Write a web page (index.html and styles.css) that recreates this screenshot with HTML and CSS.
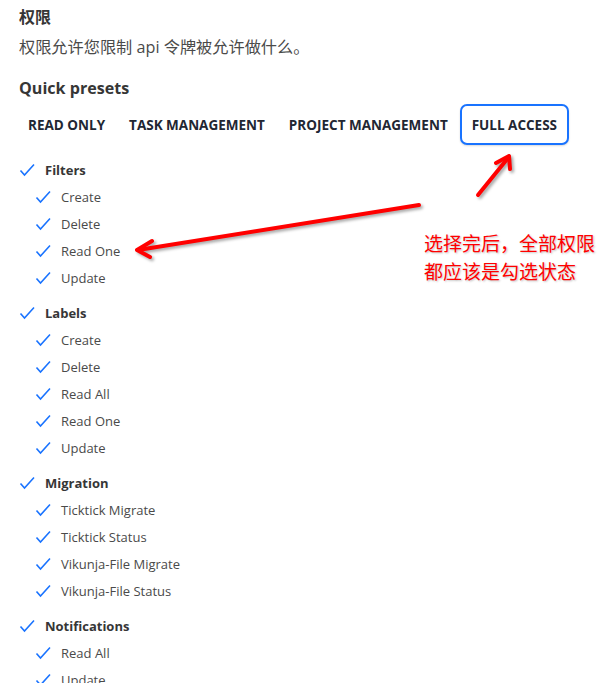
FILE: index.html
```html
<!DOCTYPE html>
<html lang="zh">
<head>
<meta charset="utf-8">
<link rel="stylesheet" href="styles.css">
</head>
<body>
<div class="page">
  <h3 class="title">权限</h3>
  <p class="desc">权限允许您限制 api 令牌被允许做什么。</p>
  <h4 class="presets-title">Quick presets</h4>
  <div class="presets">
    <button class="preset">READ ONLY</button>
    <button class="preset">TASK MANAGEMENT</button>
    <button class="preset">PROJECT MANAGEMENT</button>
    <button class="preset active">FULL ACCESS</button>
  </div>

  <div class="groups">
    <div class="group">
      <div class="row head"><svg class="chk" viewBox="0 0 16 14"><path d="M1.5 7.5 L5.5 12 L15 1.5"/></svg><span>Filters</span></div>
      <div class="row item"><svg class="chk" viewBox="0 0 16 14"><path d="M1.5 7.5 L5.5 12 L15 1.5"/></svg><span>Create</span></div>
      <div class="row item"><svg class="chk" viewBox="0 0 16 14"><path d="M1.5 7.5 L5.5 12 L15 1.5"/></svg><span>Delete</span></div>
      <div class="row item"><svg class="chk" viewBox="0 0 16 14"><path d="M1.5 7.5 L5.5 12 L15 1.5"/></svg><span>Read One</span></div>
      <div class="row item"><svg class="chk" viewBox="0 0 16 14"><path d="M1.5 7.5 L5.5 12 L15 1.5"/></svg><span>Update</span></div>
    </div>
    <div class="group">
      <div class="row head"><svg class="chk" viewBox="0 0 16 14"><path d="M1.5 7.5 L5.5 12 L15 1.5"/></svg><span>Labels</span></div>
      <div class="row item"><svg class="chk" viewBox="0 0 16 14"><path d="M1.5 7.5 L5.5 12 L15 1.5"/></svg><span>Create</span></div>
      <div class="row item"><svg class="chk" viewBox="0 0 16 14"><path d="M1.5 7.5 L5.5 12 L15 1.5"/></svg><span>Delete</span></div>
      <div class="row item"><svg class="chk" viewBox="0 0 16 14"><path d="M1.5 7.5 L5.5 12 L15 1.5"/></svg><span>Read All</span></div>
      <div class="row item"><svg class="chk" viewBox="0 0 16 14"><path d="M1.5 7.5 L5.5 12 L15 1.5"/></svg><span>Read One</span></div>
      <div class="row item"><svg class="chk" viewBox="0 0 16 14"><path d="M1.5 7.5 L5.5 12 L15 1.5"/></svg><span>Update</span></div>
    </div>
    <div class="group">
      <div class="row head"><svg class="chk" viewBox="0 0 16 14"><path d="M1.5 7.5 L5.5 12 L15 1.5"/></svg><span>Migration</span></div>
      <div class="row item"><svg class="chk" viewBox="0 0 16 14"><path d="M1.5 7.5 L5.5 12 L15 1.5"/></svg><span>Ticktick Migrate</span></div>
      <div class="row item"><svg class="chk" viewBox="0 0 16 14"><path d="M1.5 7.5 L5.5 12 L15 1.5"/></svg><span>Ticktick Status</span></div>
      <div class="row item"><svg class="chk" viewBox="0 0 16 14"><path d="M1.5 7.5 L5.5 12 L15 1.5"/></svg><span>Vikunja-File Migrate</span></div>
      <div class="row item"><svg class="chk" viewBox="0 0 16 14"><path d="M1.5 7.5 L5.5 12 L15 1.5"/></svg><span>Vikunja-File Status</span></div>
    </div>
    <div class="group">
      <div class="row head"><svg class="chk" viewBox="0 0 16 14"><path d="M1.5 7.5 L5.5 12 L15 1.5"/></svg><span>Notifications</span></div>
      <div class="row item"><svg class="chk" viewBox="0 0 16 14"><path d="M1.5 7.5 L5.5 12 L15 1.5"/></svg><span>Read All</span></div>
      <div class="row item"><svg class="chk" viewBox="0 0 16 14"><path d="M1.5 7.5 L5.5 12 L15 1.5"/></svg><span>Update</span></div>
    </div>
  </div>
</div>

<svg class="arrows" viewBox="0 0 610 683" width="610" height="683">
  <g fill="none" stroke="#ff0000" stroke-width="4" stroke-linecap="round" stroke-linejoin="round">
    <path d="M419 205 L138 250"/>
    <path d="M152 241 L137 250 L150 257"/>
    <path d="M478 195 L508 158"/>
    <path d="M496 163 L509 156 L510 169"/>
  </g>
</svg>
<div class="note">选择完后，全部权限<br>都应该是勾选状态</div>
</body>
</html>
```
FILE: styles.css
```css
html, body {
  margin: 0;
  padding: 0;
  background: #fff;
}
body {
  font-family: "Open Sans", "Noto Sans CJK SC", sans-serif;
  color: #4a4a4a;
  width: 610px;
  height: 683px;
  overflow: hidden;
  position: relative;
}
.page {
  padding: 6px 0 0 19px;
}
.title {
  margin: 0;
  font-size: 16px;
  font-weight: 700;
  color: #363636;
  line-height: 22px;
}
.desc {
  margin: 8px 0 0;
  font-size: 16.2px;
  line-height: 22px;
  color: #4a4a4a;
}
.presets-title {
  margin: 19px 0 0;
  font-size: 16.1px;
  font-weight: 700;
  color: #363636;
  line-height: 22px;
}
.presets {
  display: flex;
  margin: 5px 0 0 -3px;
}
.preset {
  font-family: "Open Sans", sans-serif;
  font-size: 13.5px;
  font-weight: 700;
  color: #222733;
  background: #fff;
  border: 2px solid transparent;
  border-radius: 7px;
  height: 41px;
  padding: 0 10px;
}
.preset.active {
  border-color: #1973ff;
  box-shadow: 0 1px 2px rgba(0,0,0,0.15);
}
.groups {
  margin-top: 11px;
}
.group {
  margin-bottom: 8px;
}
.row {
  display: flex;
  align-items: center;
  height: 27px;
  font-size: 13px;
}
.row.item {
  padding-left: 16px;
}
.row.head span {
  font-weight: 700;
  color: #363636;
}
.chk {
  width: 16px;
  height: 14px;
  margin-right: 10px;
  flex: none;
}
.chk path {
  fill: none;
  stroke: #1973ff;
  stroke-width: 1.6;
}
.arrows {
  position: absolute;
  top: 0;
  left: 0;
  filter: drop-shadow(2px 2px 1.5px rgba(0,0,0,0.35));
}
.note {
  position: absolute;
  left: 424px;
  top: 229px;
  font-family: "Noto Sans CJK SC", sans-serif;
  font-size: 19px;
  line-height: 28px;
  color: #ff0000;
  text-shadow: 1px 1px 2px rgba(0,0,0,0.25);
}
```
